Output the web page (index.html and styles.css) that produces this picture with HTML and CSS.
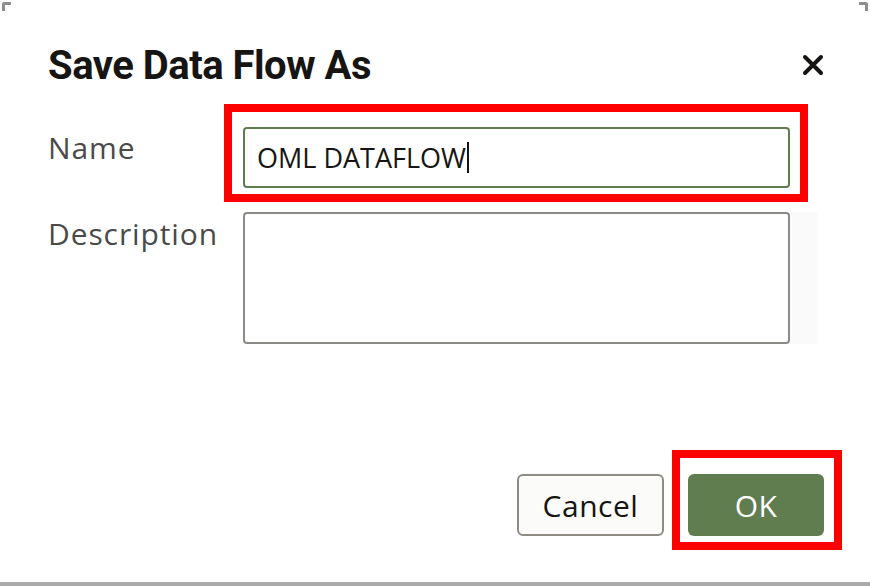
FILE: index.html
```html
<!DOCTYPE html>
<html lang="en">
<head>
<meta charset="utf-8">
<title>Save Data Flow As</title>
<link rel="stylesheet" href="styles.css">
</head>
<body>
<div class="dialog">
  <span class="corner corner-tl"></span>
  <span class="corner corner-tr"></span>
  <div class="header">
    <h1 class="title">Save Data Flow As</h1>
    <button class="close" aria-label="Close">
      <svg width="22" height="22" viewBox="0 0 22 22"><path d="M3 3 L19 19 M19 3 L3 19" stroke="#161513" stroke-width="4" stroke-linecap="round"/></svg>
    </button>
  </div>
  <div class="form">
    <label class="label label-name">Name</label>
    <div class="field">
      <div class="input"><span class="value">OML DATAFLOW</span><span class="caret"></span></div>
      <span class="highlight highlight-input"></span>
    </div>
    <label class="label label-desc">Description</label>
    <div class="field field-desc">
      <div class="textarea"></div>
      <span class="strip"></span>
    </div>
  </div>
  <div class="footer">
    <button class="btn btn-cancel">Cancel</button>
    <div class="ok-wrap">
      <button class="btn btn-ok">OK</button>
      <span class="highlight highlight-ok"></span>
    </div>
  </div>
</div>
</body>
</html>
```
FILE: styles.css
```css
* { box-sizing: border-box; }
html, body { margin: 0; padding: 0; background: #ffffff; }
body { width: 870px; height: 586px; overflow: hidden; font-family: "Open Sans", "Noto Sans", sans-serif; }

.dialog {
  position: relative;
  width: 870px;
  height: 586px;
  padding: 0 46px 0 48px;
  border-bottom: 4px solid #a9a9a9;
  display: flex;
  flex-direction: column;
}
.corner { position: absolute; top: 2px; width: 9px; height: 9px; border-top: 3px solid #8d8d8d; }
.corner-tl { left: 2px; border-left: 3px solid #8d8d8d; border-top-left-radius: 3px; }
.corner-tr { right: 2px; border-right: 3px solid #8d8d8d; border-top-right-radius: 3px; }

.header {
  display: flex;
  align-items: center;
  justify-content: space-between;
  height: 64px;
  margin-top: 33px;
}
.title {
  margin: 0;
  font-family: Roboto, "Liberation Sans", sans-serif;
  font-weight: 700;
  font-size: 40px;
  letter-spacing: -0.5px;
  color: #161513;
}
.close {
  border: 0; background: none; padding: 0; margin-right: 0;
  width: 22px; height: 22px; display: flex;
}

.form {
  display: grid;
  grid-template-columns: 195px 547px;
  row-gap: 24px;
  margin-top: 30px;
}
.label {
  font-size: 30px;
  letter-spacing: 0.9px;
  color: #4a4a48;
  line-height: 36px;
}
.label-name { padding-top: 3px; }
.label-desc { padding-top: 4px; }
.field { position: relative; }
.input {
  height: 61px;
  border: 2px solid #5f7d4f;
  border-radius: 4px;
  display: flex;
  align-items: center;
  padding-left: 12px;
  font-size: 27px;
  color: #161513;
}
.caret { display: inline-block; width: 2px; height: 31px; background: #161513; margin-left: 1px; }
.textarea {
  height: 132px;
  border: 2px solid #8a8a86;
  border-radius: 4px;
  background: #fff;
}
.strip { position: absolute; top: 0; right: -28px; width: 28px; height: 132px; background: #fafafa; }

.highlight { position: absolute; border: 8px solid #ff0000; pointer-events: none; }
.highlight-input { top: -23px; left: -19px; right: -18px; bottom: -14px; }

.footer {
  display: flex;
  justify-content: flex-end;
  gap: 24px;
  margin-top: 130px;
}
.btn {
  height: 62px;
  border-radius: 6px;
  font-family: "Open Sans", "Noto Sans", sans-serif;
  font-size: 30px;
  letter-spacing: 0.5px;
  padding: 0;
}
.btn-cancel { width: 147px; background: #fbfbf9; border: 2px solid #8f8c86; color: #161513; }
.ok-wrap { position: relative; }
.btn-ok { width: 136px; background: #5f7d4f; border: 0; color: #ffffff; }
.highlight-ok { top: -24px; left: -16px; right: -18px; bottom: -14px; }
```
